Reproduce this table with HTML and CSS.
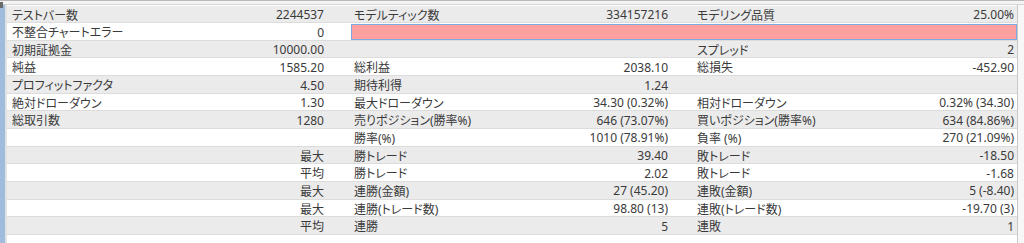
FILE: index.html
```html
<!DOCTYPE html>
<html lang="ja">
<head>
<meta charset="utf-8">
<title>レポート</title>
<link rel="stylesheet" href="styles.css">
</head>
<body>
<div class="window">
  <div class="topbar"><span class="corner"></span></div>
  <div class="main">
    <div class="sidebar"></div>
    <div class="report">
      <div class="row gray">
        <span class="l1">テストバー数</span><span class="v1">2244537</span>
        <span class="l2">モデルティック数</span><span class="v2">334157216</span>
        <span class="l3">モデリング品質</span><span class="v3">25.00%</span>
      </div>
      <div class="row white">
        <span class="l1">不整合チャートエラー</span><span class="v1">0</span>
        <span class="errbar"></span>
      </div>
      <div class="row gray">
        <span class="l1">初期証拠金</span><span class="v1">10000.00</span>
        <span class="l2"></span><span class="v2"></span>
        <span class="l3">スプレッド</span><span class="v3">2</span>
      </div>
      <div class="row white">
        <span class="l1">純益</span><span class="v1">1585.20</span>
        <span class="l2">総利益</span><span class="v2">2038.10</span>
        <span class="l3">総損失</span><span class="v3">-452.90</span>
      </div>
      <div class="row gray">
        <span class="l1">プロフィットファクタ</span><span class="v1">4.50</span>
        <span class="l2">期待利得</span><span class="v2">1.24</span>
        <span class="l3"></span><span class="v3"></span>
      </div>
      <div class="row white">
        <span class="l1">絶対ドローダウン</span><span class="v1">1.30</span>
        <span class="l2">最大ドローダウン</span><span class="v2">34.30 (0.32%)</span>
        <span class="l3">相対ドローダウン</span><span class="v3">0.32% (34.30)</span>
      </div>
      <div class="row gray">
        <span class="l1">総取引数</span><span class="v1">1280</span>
        <span class="l2">売りポジション(勝率%)</span><span class="v2">646 (73.07%)</span>
        <span class="l3">買いポジション(勝率%)</span><span class="v3">634 (84.86%)</span>
      </div>
      <div class="row white">
        <span class="l1"></span><span class="v1"></span>
        <span class="l2">勝率(%)</span><span class="v2">1010 (78.91%)</span>
        <span class="l3">負率 (%)</span><span class="v3">270 (21.09%)</span>
      </div>
      <div class="row gray">
        <span class="l1"></span><span class="v1">最大</span>
        <span class="l2">勝トレード</span><span class="v2">39.40</span>
        <span class="l3">敗トレード</span><span class="v3">-18.50</span>
      </div>
      <div class="row white">
        <span class="l1"></span><span class="v1">平均</span>
        <span class="l2">勝トレード</span><span class="v2">2.02</span>
        <span class="l3">敗トレード</span><span class="v3">-1.68</span>
      </div>
      <div class="row gray">
        <span class="l1"></span><span class="v1">最大</span>
        <span class="l2">連勝(金額)</span><span class="v2">27 (45.20)</span>
        <span class="l3">連敗(金額)</span><span class="v3">5 (-8.40)</span>
      </div>
      <div class="row white">
        <span class="l1"></span><span class="v1">最大</span>
        <span class="l2">連勝(トレード数)</span><span class="v2">98.80 (13)</span>
        <span class="l3">連敗(トレード数)</span><span class="v3">-19.70 (3)</span>
      </div>
      <div class="row gray">
        <span class="l1"></span><span class="v1">平均</span>
        <span class="l2">連勝</span><span class="v2">5</span>
        <span class="l3">連敗</span><span class="v3">1</span>
      </div>
    </div>
    <div class="rightedge"></div>
  </div>
</div>
</body>
</html>
```

FILE: styles.css
```css
html, body {
  margin: 0;
  padding: 0;
  background: #ffffff;
  overflow: hidden;
}

.window {
  width: 1024px;
  height: 243px;
  display: flex;
  flex-direction: column;
  font-family: "Noto Sans", "Noto Sans CJK JP", sans-serif;
  font-size: 12px;
  color: #3a3a3a;
  font-feature-settings: "palt";
}

.topbar {
  height: 5px;
  flex: none;
  background: #f4f4f4;
  border-top: 1px solid #b8b8b8;
  border-bottom: 1px solid #d4d4d4;
  box-sizing: border-box;
  position: relative;
}

.corner {
  position: absolute;
  left: 0;
  top: 1px;
  width: 3px;
  height: 6px;
  background: #6a6a6a;
}

.main {
  flex: 1;
  display: flex;
  min-height: 0;
}

.sidebar {
  width: 5px;
  flex: none;
  background: #9fbcdc;
  border-right: 2px solid #e2e2e2;
}

.report {
  width: 1010px;
  flex: none;
  display: flex;
  flex-direction: column;
  padding-top: 0.5px;
}

.rightedge {
  flex: 1;
  border-left: 1px solid #c8c8c8;
  background: #f7f7f7;
}

.row {
  display: grid;
  grid-template-columns: 160px 163px 170px 175px 170px 172px;
  height: 17.65px;
  box-sizing: border-box;
  border-bottom: 1px solid #dcdcdc;
  align-items: center;
  white-space: nowrap;
}

.row.gray { background: #ebebeb; }
.row.white { background: #ffffff; }

.l1 { padding-left: 5px; }
.v1 { padding-right: 6px; text-align: right; }
.l2 { padding-left: 24px; }
.v2 { padding-right: 7px; text-align: right; }
.l3 { padding-left: 22px; }
.v3 { padding-right: 3px; text-align: right; }

.errbar {
  grid-column: 3 / 7;
  margin-left: 21px;
  height: 16px;
  box-sizing: border-box;
  background: #ffa0a0;
  border: 1px solid #7ea9dc;
}
```
